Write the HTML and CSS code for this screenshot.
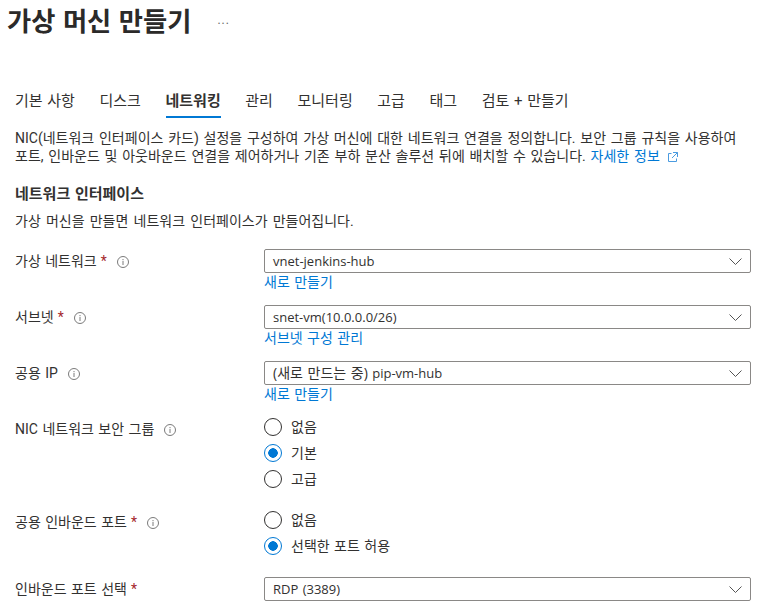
FILE: index.html
```html
<!DOCTYPE html>
<html lang="ko">
<head>
    <meta charset="UTF-8">
    <meta name="viewport" content="width=device-width, initial-scale=1.0">
    <title>가상 머신 만들기</title>
    <link rel="stylesheet" href="styles.css">
</head>
<body>
    <div class="title-bar">
        <h1>가상 머신 만들기</h1>
        <span class="more">...</span>
    </div>
    <nav class="tabs">
        <a href="#">기본 사항</a>
        <a href="#">디스크</a>
        <a href="#" class="active">네트워킹</a>
        <a href="#">관리</a>
        <a href="#">모니터링</a>
        <a href="#">고급</a>
        <a href="#">태그</a>
        <a href="#">검토 + 만들기</a>
    </nav>
    <p class="intro">NIC(네트워크 인터페이스 카드) 설정을 구성하여 가상 머신에 대한 네트워크 연결을 정의합니다. 보안 그룹 규칙을 사용하여 포트, 인바운드 및 아웃바운드 연결을 제어하거나 기존 부하 분산 솔루션 뒤에 배치할 수 있습니다. <a href="#">자세한 정보<svg class="ext" width="10" height="10" viewBox="0 0 10 10"><path d="M3.5 1.500H.5v8h8v-3M5 .5h4.500v4.500M9.500 .5 4 6" fill="none" stroke="currentColor"/></svg></a></p>
    <h2>네트워크 인터페이스</h2>
    <p class="sub">가상 머신을 만들면 네트워크 인터페이스가 만들어집니다.</p>

    <div class="form">
        <div class="row row-select">
            <div class="label">가상 네트워크<span class="req">*</span><svg class="info" width="12" height="12" viewBox="0 0 12 12"><circle cx="6" cy="6" r="5.500" fill="none" stroke="#7a7a7a"/><path d="M6 5v4M6 3v1.200" stroke="#7a7a7a" fill="none"/></svg></div>
            <div class="control">
                <div class="select"><span>vnet-jenkins-hub</span><svg width="13" height="7" viewBox="0 0 13 7"><path d="M.5.5 6.500 6.500 12.500.5" fill="none" stroke="#555"/></svg></div>
                <a href="#" class="link">새로 만들기</a>
            </div>
        </div>
        <div class="row row-select">
            <div class="label">서브넷<span class="req">*</span><svg class="info" width="12" height="12" viewBox="0 0 12 12"><circle cx="6" cy="6" r="5.500" fill="none" stroke="#7a7a7a"/><path d="M6 5v4M6 3v1.200" stroke="#7a7a7a" fill="none"/></svg></div>
            <div class="control">
                <div class="select"><span>snet-vm(10.0.0.0/26)</span><svg width="13" height="7" viewBox="0 0 13 7"><path d="M.5.5 6.500 6.500 12.500.5" fill="none" stroke="#555"/></svg></div>
                <a href="#" class="link">서브넷 구성 관리</a>
            </div>
        </div>
        <div class="row row-select">
            <div class="label">공용 IP<svg class="info" width="12" height="12" viewBox="0 0 12 12"><circle cx="6" cy="6" r="5.500" fill="none" stroke="#7a7a7a"/><path d="M6 5v4M6 3v1.200" stroke="#7a7a7a" fill="none"/></svg></div>
            <div class="control">
                <div class="select"><span><span class="ko">(새로 만드는 중)</span> pip-vm-hub</span><svg width="13" height="7" viewBox="0 0 13 7"><path d="M.5.5 6.500 6.500 12.500.5" fill="none" stroke="#555"/></svg></div>
                <a href="#" class="link">새로 만들기</a>
            </div>
        </div>
        <div class="row row-radio">
            <div class="label">NIC 네트워크 보안 그룹<svg class="info" width="12" height="12" viewBox="0 0 12 12"><circle cx="6" cy="6" r="5.500" fill="none" stroke="#7a7a7a"/><path d="M6 5v4M6 3v1.200" stroke="#7a7a7a" fill="none"/></svg></div>
            <div class="control radios">
                <div class="radio"><span class="dot"></span>없음</div>
                <div class="radio on"><span class="dot"></span>기본</div>
                <div class="radio"><span class="dot"></span>고급</div>
            </div>
        </div>
        <div class="row row-radio">
            <div class="label">공용 인바운드 포트<span class="req">*</span><svg class="info" width="12" height="12" viewBox="0 0 12 12"><circle cx="6" cy="6" r="5.500" fill="none" stroke="#7a7a7a"/><path d="M6 5v4M6 3v1.200" stroke="#7a7a7a" fill="none"/></svg></div>
            <div class="control radios">
                <div class="radio"><span class="dot"></span>없음</div>
                <div class="radio on"><span class="dot"></span>선택한 포트 허용</div>
            </div>
        </div>
        <div class="row row-last">
            <div class="label">인바운드 포트 선택<span class="req">*</span></div>
            <div class="control">
                <div class="select"><span>RDP (3389)</span><svg width="13" height="7" viewBox="0 0 13 7"><path d="M.5.5 6.500 6.500 12.500.5" fill="none" stroke="#555"/></svg></div>
            </div>
        </div>
    </div>
</body>
</html>
```

FILE: styles.css
```css
body {
    font-family: Roboto, "Noto Sans CJK KR", sans-serif;
    font-size: 14px;
    line-height: 18px;
    word-spacing: 1px;
    color: #323130;
    background-color: white;
    margin: 0;
    padding: 0;
    height: 604px;
    overflow: hidden;
}
a {
    color: #0078d4;
    text-decoration: none;
}
.title-bar {
    display: flex;
    align-items: center;
    height: 44px;
    padding-left: 7px;
}
h1 {
    margin: 0;
    font-size: 26.3px;
    line-height: 44px;
    font-weight: 600;
    color: #2b2a29;
}
.more {
    margin-left: 26px;
    margin-top: -4px;
    font-size: 12px;
    color: #666;
    letter-spacing: 1px;
}
.tabs {
    display: flex;
    gap: 24.6px;
    margin-top: 45px;
    padding-left: 15px;
    height: 29px;
}
.tabs a {
    color: #323130;
    font-size: 15px;
    line-height: 24px;
    box-sizing: border-box;
    height: 29px;
}
.tabs a.active {
    font-weight: 600;
    border-bottom: 2px solid #0078d4;
}
.intro {
    margin: 11px 15px 0;
    width: 727px;
    word-spacing: 1.3px;
}
.ext {
    vertical-align: -1px;
    margin-left: 8px;
    color: #4a9be0;
}
h2 {
    margin: 20px 15px 0;
    font-size: 15px;
    line-height: 18px;
    font-weight: 600;
}
.sub {
    margin: 9px 15px 0;
    word-spacing: 1.7px;
}
.form {
    margin-top: 19px;
    padding-left: 15px;
}
.row {
    display: flex;
}
.row-select {
    padding-bottom: 14px;
}
.row-radio {
    padding-bottom: 22px;
}
.label {
    width: 249px;
    flex: none;
    line-height: 22px;
    padding-top: 1px;
}
.req {
    color: #a4262c;
    margin-left: 4px;
}
.info {
    margin-left: 10px;
    vertical-align: -2px;
}
.control {
    width: 487px;
}
.select {
    display: flex;
    justify-content: space-between;
    align-items: center;
    box-sizing: border-box;
    height: 24px;
    border: 1px solid #8a8886;
    border-radius: 2px;
    padding: 0 8px 0 8px;
    font-family: "Open Sans", "Noto Sans CJK KR", sans-serif;
    font-size: 13px;
}
.ko {
    font-size: 14px;
}
.link {
    display: block;
    line-height: 18px;
}
.radios {
    display: flex;
    flex-direction: column;
    gap: 8px;
    padding-top: 1px;
}
.radio {
    display: flex;
    align-items: center;
    height: 18px;
}
.dot {
    box-sizing: border-box;
    width: 18px;
    height: 18px;
    border: 1px solid #323130;
    border-radius: 50%;
    margin-right: 9px;
    flex: none;
}
.radio.on .dot {
    border-color: #0078d4;
    background: radial-gradient(circle, #0078d4 4.500px, white 5px);
}
```
